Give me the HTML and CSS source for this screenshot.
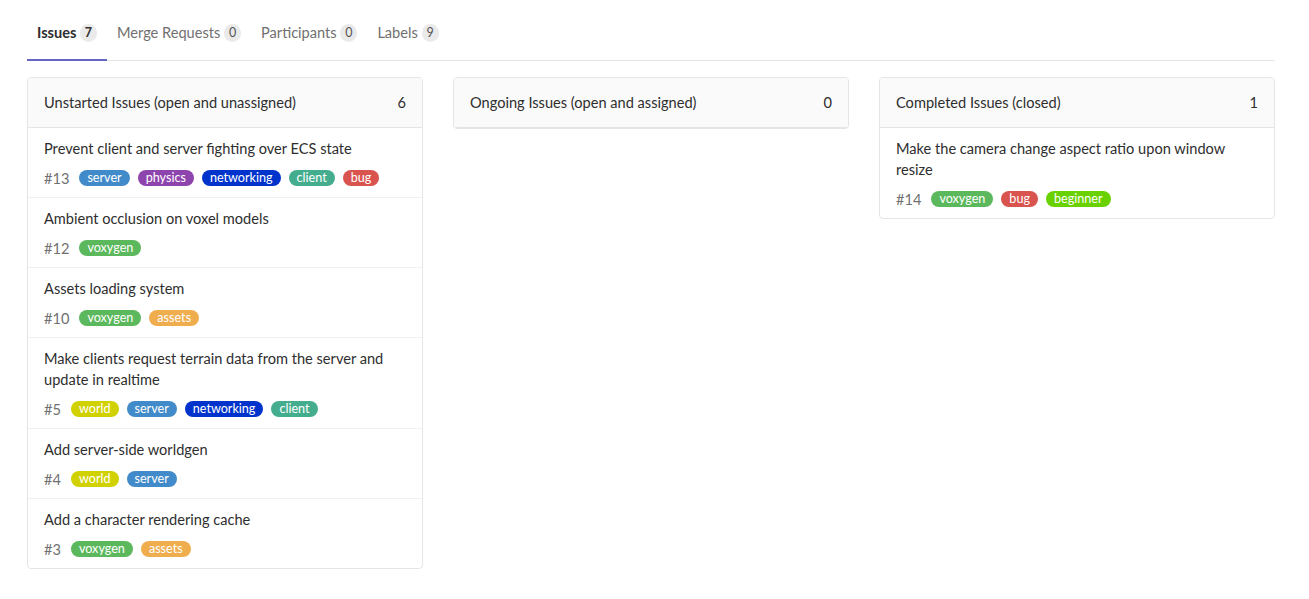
FILE: index.html
```html
<!DOCTYPE html>
<html>
<head>
<meta charset="utf-8">
<link rel="stylesheet" href="styles.css">
</head>
<body>
<div class="page">
  <nav class="tabs">
    <div class="tab active">Issues <span class="badge">7</span></div>
    <div class="tab">Merge Requests <span class="badge">0</span></div>
    <div class="tab">Participants <span class="badge">0</span></div>
    <div class="tab">Labels <span class="badge">9</span></div>
  </nav>
  <div class="board">
    <section class="card">
      <header class="card-head"><span>Unstarted Issues (open and unassigned)</span><span>6</span></header>
      <div class="item">
        <div class="title">Prevent client and server fighting over ECS state</div>
        <div class="meta"><span class="num">#13</span><span class="lbl server">server</span><span class="lbl physics">physics</span><span class="lbl networking">networking</span><span class="lbl client">client</span><span class="lbl bug">bug</span></div>
      </div>
      <div class="item">
        <div class="title">Ambient occlusion on voxel models</div>
        <div class="meta"><span class="num">#12</span><span class="lbl voxygen">voxygen</span></div>
      </div>
      <div class="item">
        <div class="title">Assets loading system</div>
        <div class="meta"><span class="num">#10</span><span class="lbl voxygen">voxygen</span><span class="lbl assets">assets</span></div>
      </div>
      <div class="item">
        <div class="title">Make clients request terrain data from the server and update in realtime</div>
        <div class="meta"><span class="num">#5</span><span class="lbl world">world</span><span class="lbl server">server</span><span class="lbl networking">networking</span><span class="lbl client">client</span></div>
      </div>
      <div class="item">
        <div class="title">Add server-side worldgen</div>
        <div class="meta"><span class="num">#4</span><span class="lbl world">world</span><span class="lbl server">server</span></div>
      </div>
      <div class="item">
        <div class="title">Add a character rendering cache</div>
        <div class="meta"><span class="num">#3</span><span class="lbl voxygen">voxygen</span><span class="lbl assets">assets</span></div>
      </div>
    </section>
    <section class="card">
      <header class="card-head"><span>Ongoing Issues (open and assigned)</span><span>0</span></header>
    </section>
    <section class="card">
      <header class="card-head"><span>Completed Issues (closed)</span><span>1</span></header>
      <div class="item">
        <div class="title">Make the camera change aspect ratio upon window resize</div>
        <div class="meta"><span class="num">#14</span><span class="lbl voxygen">voxygen</span><span class="lbl bug">bug</span><span class="lbl beginner">beginner</span></div>
      </div>
    </section>
  </div>
</div>
</body>
</html>
```
FILE: styles.css
```css
body {
  margin: 0;
  font-family: "Lato", "Noto Sans", sans-serif;
  font-size: 14.6px;
  color: #2e2e2e;
  background: #fff;
}
.page {
  width: 1248px;
  margin-left: 27px;
  padding-top: 10px;
}
.tabs {
  display: flex;
  border-bottom: 1px solid #e5e5e5;
}
.tab {
  padding: 13px 10px 16px;
  line-height: 20px;
  color: #707070;
  border-bottom: 2px solid transparent;
  margin-bottom: -1px;
}
.tab.active {
  color: #2e2e2e;
  font-weight: 700;
  border-bottom-color: #6666c4;
}
.badge {
  display: inline-block;
  min-width: 8px;
  padding: 0 4.5px;
  height: 18px;
  line-height: 18px;
  border-radius: 9px;
  background: #eaeaea;
  font-size: 12.5px;
  text-align: center;
  color: #555;
  vertical-align: 1px;
}
.tab.active .badge { color: #2e2e2e; }
.board {
  display: grid;
  grid-template-columns: repeat(3, 396px);
  column-gap: 30px;
  align-items: start;
  margin-top: 16px;
}
.card {
  border: 1px solid #e5e5e5;
  border-radius: 4px;
  background: #fff;
  overflow: hidden;
}
.card-head {
  display: flex;
  justify-content: space-between;
  align-items: center;
  height: 49px;
  padding: 0 16px;
  background: #fafafa;
  border-bottom: 1px solid #e5e5e5;
}
.item {
  padding: 10px 16px 9px;
  border-bottom: 1px solid #f0f0f0;
}
.item:last-child { border-bottom: 0; }
.title {
  line-height: 21px;
}
.meta {
  display: flex;
  align-items: center;
  gap: 8px;
  height: 20px;
  margin-top: 9px;
}
.num {
  color: #707070;
  margin-right: 2px;
}
.lbl {
  display: inline-block;
  height: 16px;
  line-height: 16px;
  padding: 0 8px;
  border-radius: 8px;
  color: #fff;
  font-size: 12.6px;
}
.server { background: #428bca; }
.physics { background: #8e44ad; }
.networking { background: #0033cc; }
.client { background: #44ad8e; }
.bug { background: #d9534f; }
.voxygen { background: #5cb85c; }
.assets { background: #f0ad4e; }
.world { background: #d1d100; }
.beginner { background: #69d100; }
```
